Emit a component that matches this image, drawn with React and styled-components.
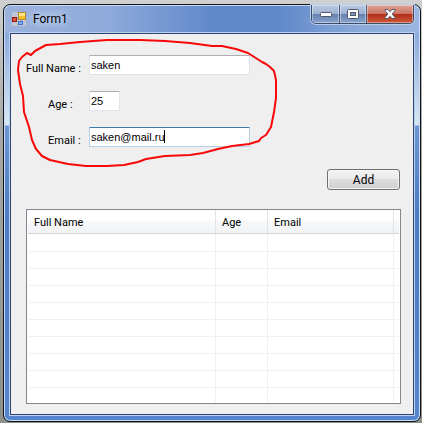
import React, { useState } from 'react';
import styled, { createGlobalStyle, css } from 'styled-components';

const GlobalStyle = createGlobalStyle`
  * { box-sizing: border-box; }
  body {
    margin: 0;
    background: linear-gradient(#d0d0d0, #a8a8a6 30%, #8e8e8a);
  }
`;

const Desktop = styled.div`
  min-height: 100vh;
  display: flex;
  padding: 4px 1px 1px 3px;
  font: 11px/14px Roboto, 'Liberation Sans', sans-serif;
  color: #000;
`;

const WindowStyled = styled.main`
  flex: 1;
  min-width: 0;
  display: flex;
  flex-direction: column;
  padding: 0 6px 6px;
  border: 1px solid #10141c;
  border-radius: 7px;
  box-shadow: inset 0 0 0 1px #c9dcf4;
  background:
    linear-gradient(90deg, #9ab2dc, #8faadb 25%, #6089ca 50%, #6089ca 66%, #8aa9d8 85%, #9ab6e0) top / 100% 28px no-repeat,
    linear-gradient(#8caada 28px, #dbe7f4 120px, #6d95d1 121px, #4c7cc4 210px, #5585cc);
`;

const TitleBar = styled.header`
  height: 28px;
  display: flex;
  align-items: flex-start;
  padding-left: 2px;
`;

const Title = styled.h1`
  flex: 1;
  margin: 0;
  padding: 5px 0 0 7px;
  font: 12px/18px Roboto, 'Noto Sans', sans-serif;
  text-shadow: 0 0 8px #dde8f8, 0 0 8px #dde8f8;
`;

const AppIcon = styled.svg`
  margin-top: 7px;
`;

const Controls = styled.div`
  display: flex;
  border: 1px solid #3b4c6b;
  border-top: 0;
  border-radius: 0 0 5px 5px;
  box-shadow: 0 0 0 1px #b9cdea;
  overflow: hidden;
`;

const ControlButton = styled.button`
  width: ${(p) => p.$width}px;
  height: 18px;
  padding: 0;
  display: flex;
  align-items: center;
  justify-content: center;
  border: 0;
  border-left: 1px solid #4a5b7a;
  background: linear-gradient(#b9c9e0, #9db2d2 48%, #6580ad 50%, #89a5cf);
  box-shadow: inset 0 0 0 1px rgba(255, 255, 255, 0.4);

  &:first-child { border-left: 0; }

  ${(p) => p.$danger && css`
    background: linear-gradient(#e0a294, #cc7466 48%, #b02c17 50%, #cf5a3c);
  `}
`;

const Client = styled.div`
  flex: 1;
  display: flex;
  flex-direction: column;
  padding: 21px 12px 10px 15px;
  border: 1px solid #2c4470;
  outline: 1px solid #b9d0ef;
  background: #efefef;
  position: relative;
`;

const FormStyled = styled.form`
  display: flex;
  flex-direction: column;
`;

const Field = styled.div`
  display: flex;
  margin-bottom: 16px;
`;

const Label = styled.label`
  width: 63px;
  padding: 7px 0 0 ${(p) => (p.$indent ? 22 : 0)}px;
  height: 20px;
  white-space: nowrap;
`;

const InputWrapper = styled.div`
  position: relative;
  width: ${(p) => p.$width}px;
`;

const Input = styled.input`
  display: block;
  width: 100%;
  height: 20px;
  padding: 0 1px 1px;
  border: 1px solid #e2e3ea;
  border-top-color: #abadb3;
  border-radius: 1px;
  outline: 0;
  background: #fff;
  color: #000;
  font: 11px 'Liberation Sans', Arial, sans-serif;

  ${(p) => p.$active && css`
    border-color: #b5cfe7;
    border-top-color: #3d7bad;
    caret-color: transparent;
  `}
`;

const Caret = styled.span`
  position: absolute;
  left: 75px;
  top: 3px;
  width: 1px;
  height: 13px;
  background: #000;
`;

const AddButton = styled.button`
  align-self: flex-end;
  width: 73px;
  height: 21px;
  margin: 6px 1px 19px 0;
  padding: 0;
  border: 1px solid #707070;
  border-radius: 3px;
  box-shadow: inset 0 0 0 1px #f6f6f6;
  background: linear-gradient(#f2f2f2, #ebebeb 48%, #dddddd 50%, #cfcfcf);
  color: #000;
  font: 12px/14px Roboto, 'Liberation Sans', sans-serif;
`;

const ListView = styled.div`
  flex: 1;
  display: flex;
  padding: 0 1px 1px;
  border: 1px solid #828790;
  background: #fff;
`;

const Table = styled.table`
  width: 100%;
  table-layout: fixed;
  border-collapse: separate;
  border-spacing: 0;
`;

const Th = styled.th`
  width: ${(p) => (p.$width ? `${p.$width}px` : 'auto')};
  height: 24px;
  padding: 3px 0 0 6px;
  border-bottom: 1px solid #d5d5d5;
  border-right: ${(p) => (p.$width ? '1px solid #e0e3e8' : 0)};
  background: linear-gradient(#fff 10px, #f7f8fa 11px, #f1f2f4);
  font-weight: normal;
  text-align: left;
`;

const Td = styled.td`
  height: 17px;
  padding: 0;
  border-bottom: 1px solid #f0f0f0;
  border-right: 1px solid #f0f0f0;

  &:last-child { border-right: 0; }
  tr:first-child > & { height: 18px; }
  tr:last-child > & { height: auto; border-bottom: 0; }
`;

const Marker = styled.svg`
  position: absolute;
  left: 0;
  top: 0;
  pointer-events: none;
`;

const columns = [
  { name: 'Full Name', width: 188 },
  { name: 'Age', width: 52 },
  { name: 'Email', width: 126 },
];

const rows = Array.from({ length: 10 }, (_, i) => i);

const WindowControls = () => (
  <Controls>
    <ControlButton type="button" aria-label="Minimize" $width={27}>
      <svg width="12" height="5">
        <rect x="0.5" y="0.5" width="11" height="4" rx="1" fill="#fff" stroke="#535666" />
      </svg>
    </ControlButton>
    <ControlButton type="button" aria-label="Maximize" $width={27}>
      <svg width="12" height="10">
        <rect x="0.5" y="0.5" width="11" height="9" rx="1" fill="#fff" stroke="#535666" />
        <rect x="3.5" y="3.5" width="5" height="3" fill="#7f9ac4" stroke="#535666" />
      </svg>
    </ControlButton>
    <ControlButton type="button" aria-label="Close" $width={47} $danger>
      <svg width="12" height="10" viewBox="0 0 12 10">
        <path
          d="M1 .5h3L6 2.7 8 .5h3v1L8.2 5 11 8.5v1H8L6 7.3 4 9.5H1v-1L3.8 5 1 1.5z"
          fill="#fff"
          stroke="#535666"
        />
      </svg>
    </ControlButton>
  </Controls>
);

const App = () => {
  const [form, setForm] = useState({ name: 'saken', age: '25', email: 'saken@mail.ru' });

  const changeHandler = (e) => {
    setForm({ ...form, [e.target.name]: e.target.value });
  };

  return (
    <Desktop>
      <GlobalStyle />
      <WindowStyled>
        <TitleBar>
          <AppIcon width="14" height="14" viewBox="0 0 14 14">
            <path d="M.5.5h5v4h-5zM.5 10.5h4v3h-4z" fill="#b9c6dc" stroke="#c3c5c8" />
            <rect x="6.5" y="0.5" width="7" height="7" fill="#f6bf2c" stroke="#b98a26" />
            <rect x="7" y="1" width="6" height="3" fill="#ffe48a" />
            <rect x="0.5" y="5.5" width="4" height="4" fill="#e0533c" stroke="#951b14" />
            <path d="M5.5 8.5h8v5h-8z" fill="#b9c6dc" stroke="#c3c5c8" />
            <rect x="6.5" y="9.5" width="4" height="3" fill="#7fb0f5" stroke="#3f6fd0" />
          </AppIcon>
          <Title>Form1</Title>
          <WindowControls />
        </TitleBar>
        <Client>
          <FormStyled onSubmit={(e) => e.preventDefault()}>
            <Field>
              <Label htmlFor="name">Full Name :</Label>
              <InputWrapper $width={161}>
                <Input id="name" name="name" value={form.name} onChange={changeHandler} />
              </InputWrapper>
            </Field>
            <Field>
              <Label htmlFor="age" $indent>Age :</Label>
              <InputWrapper $width={31}>
                <Input id="age" name="age" value={form.age} onChange={changeHandler} />
              </InputWrapper>
            </Field>
            <Field>
              <Label htmlFor="email" $indent>Email :</Label>
              <InputWrapper $width={161}>
                <Input id="email" name="email" value={form.email} onChange={changeHandler} $active />
                <Caret />
              </InputWrapper>
            </Field>
            <AddButton type="submit">Add</AddButton>
          </FormStyled>
          <ListView>
            <Table>
              <thead>
                <tr>
                  {columns.map((c) => <Th key={c.name} $width={c.width}>{c.name}</Th>)}
                  <Th aria-hidden="true" />
                </tr>
              </thead>
              <tbody>
                {rows.map((r) => (
                  <tr key={r}>
                    <Td /><Td /><Td /><Td />
                  </tr>
                ))}
              </tbody>
            </Table>
          </ListView>
          <Marker width="280" height="150" viewBox="11 34 280 150" fill="none" stroke="#f80808" strokeWidth="2" strokeLinejoin="round">
            <path d="M31 55 L29 54 L27 53 L22 57 L19 61 L18 70 L20 84 L23 96 L24 112 L29 127 L32 140 L36 149 L42 156 L50 160 L68 164 L86 166 L107 166 L124 165 L138 162 L146 159 L165 156 L190 155 L203 153 L218 149 L232 146 L249 144 L259 141 L261 138 L266 135 L271 127 L274 112 L276 98 L276 80 L274 71 L270 67 L266 64 L262 62 L248 53 L236 49 L222 46 L212 46 L190 43 L165 41 L140 40 L107 40 L80 42 L60 44 L46 45 L35 51 Z" />
          </Marker>
        </Client>
      </WindowStyled>
    </Desktop>
  );
};

export default App;
